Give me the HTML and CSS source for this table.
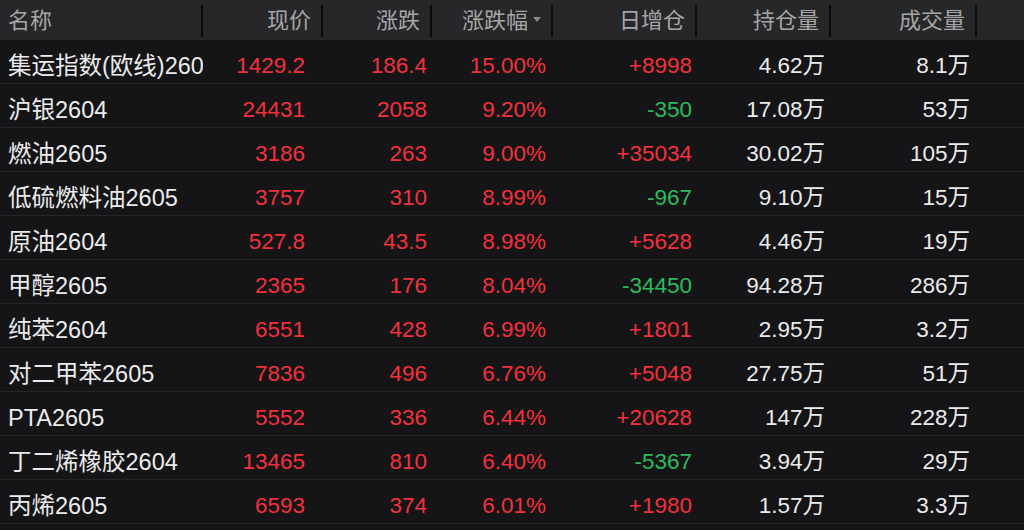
FILE: index.html
```html
<!DOCTYPE html>
<html lang="zh">
<head>
<meta charset="utf-8">
<link rel="stylesheet" href="styles.css">
</head>
<body>
<div class="table">
  <div class="row head">
    <div class="c name">名称</div>
    <div class="c">现价</div>
    <div class="c">涨跌</div>
    <div class="c sort">涨跌幅<span class="tri"></span></div>
    <div class="c">日增仓</div>
    <div class="c">持仓量</div>
    <div class="c">成交量</div>
    <div class="c last"></div>
  </div>

  <div class="row"><div class="c name">集运指数(欧线)2604</div><div class="c price up">1429.2</div><div class="c chg up">186.4</div><div class="c pct up">15.00%</div><div class="c day up">+8998</div><div class="c oi">4.62万</div><div class="c vol">8.1万</div><div class="c"></div></div>
  <div class="row"><div class="c name">沪银2604</div><div class="c price up">24431</div><div class="c chg up">2058</div><div class="c pct up">9.20%</div><div class="c day down">-350</div><div class="c oi">17.08万</div><div class="c vol">53万</div><div class="c"></div></div>
  <div class="row"><div class="c name">燃油2605</div><div class="c price up">3186</div><div class="c chg up">263</div><div class="c pct up">9.00%</div><div class="c day up">+35034</div><div class="c oi">30.02万</div><div class="c vol">105万</div><div class="c"></div></div>
  <div class="row"><div class="c name">低硫燃料油2605</div><div class="c price up">3757</div><div class="c chg up">310</div><div class="c pct up">8.99%</div><div class="c day down">-967</div><div class="c oi">9.10万</div><div class="c vol">15万</div><div class="c"></div></div>
  <div class="row"><div class="c name">原油2604</div><div class="c price up">527.8</div><div class="c chg up">43.5</div><div class="c pct up">8.98%</div><div class="c day up">+5628</div><div class="c oi">4.46万</div><div class="c vol">19万</div><div class="c"></div></div>
  <div class="row"><div class="c name">甲醇2605</div><div class="c price up">2365</div><div class="c chg up">176</div><div class="c pct up">8.04%</div><div class="c day down">-34450</div><div class="c oi">94.28万</div><div class="c vol">286万</div><div class="c"></div></div>
  <div class="row"><div class="c name">纯苯2604</div><div class="c price up">6551</div><div class="c chg up">428</div><div class="c pct up">6.99%</div><div class="c day up">+1801</div><div class="c oi">2.95万</div><div class="c vol">3.2万</div><div class="c"></div></div>
  <div class="row"><div class="c name">对二甲苯2605</div><div class="c price up">7836</div><div class="c chg up">496</div><div class="c pct up">6.76%</div><div class="c day up">+5048</div><div class="c oi">27.75万</div><div class="c vol">51万</div><div class="c"></div></div>
  <div class="row"><div class="c name">PTA2605</div><div class="c price up">5552</div><div class="c chg up">336</div><div class="c pct up">6.44%</div><div class="c day up">+20628</div><div class="c oi">147万</div><div class="c vol">228万</div><div class="c"></div></div>
  <div class="row"><div class="c name">丁二烯橡胶2604</div><div class="c price up">13465</div><div class="c chg up">810</div><div class="c pct up">6.40%</div><div class="c day down">-5367</div><div class="c oi">3.94万</div><div class="c vol">29万</div><div class="c"></div></div>
  <div class="row"><div class="c name">丙烯2605</div><div class="c price up">6593</div><div class="c chg up">374</div><div class="c pct up">6.01%</div><div class="c day up">+1980</div><div class="c oi">1.57万</div><div class="c vol">3.3万</div><div class="c"></div></div>
</div>
</body>
</html>
```

FILE: styles.css
```css
html, body {
  margin: 0;
  padding: 0;
  background: #151518;
  overflow: hidden;
}
body {
  width: 1024px;
  height: 530px;
  font-family: "Liberation Sans", "Noto Sans CJK SC", sans-serif;
  font-size: 22.5px;
  color: #ebebeb;
}
.table {
  display: flex;
  flex-direction: column;
}
.row {
  display: grid;
  grid-template-columns: 203px 120px 109px 121px 144px 134px 146px 47px;
  height: 44px;
  box-sizing: border-box;
  border-bottom: 1px solid #26262a;
  align-items: stretch;
}
.row.head {
  height: 40px;
  border-bottom: none;
  background: #27272a;
  color: #a6a6a6;
  font-size: 22px;
  align-items: center;
}
.c {
  text-align: right;
  white-space: nowrap;
  overflow: hidden;
  box-sizing: border-box;
  padding-top: 9px;
  line-height: 34px;
}
.head .c {
  line-height: 32px;
  height: 32px;
  padding-top: 0;
  padding-right: 10px;
  border-right: 2px solid #0c0c0e;
  margin-top: 1px;
}
.head .c.last {
  border-right: none;
}
.head .c.name {
  padding-left: 8px;
  font-size: 22px;
  text-align: left;
}
.c.name {
  text-align: left;
  padding-left: 8px;
  padding-right: 3px;
  font-size: 23.5px;
  text-overflow: clip;
}
.sort .tri {
  display: inline-block;
  width: 0;
  height: 0;
  border-left: 4px solid transparent;
  border-right: 4px solid transparent;
  border-top: 5px solid #8a8a8a;
  margin-left: 5px;
  vertical-align: middle;
  position: relative;
  top: -2px;
}
.head .c.sort {
  padding-right: 10px;
}
.price { padding-right: 18px; }
.chg { padding-right: 5px; }
.pct { padding-right: 7px; }
.day { padding-right: 5px; }
.oi { padding-right: 6px; }
.vol { padding-right: 7px; }
.up { color: #f2313b; }
.down { color: #2bbb5b; }
```
